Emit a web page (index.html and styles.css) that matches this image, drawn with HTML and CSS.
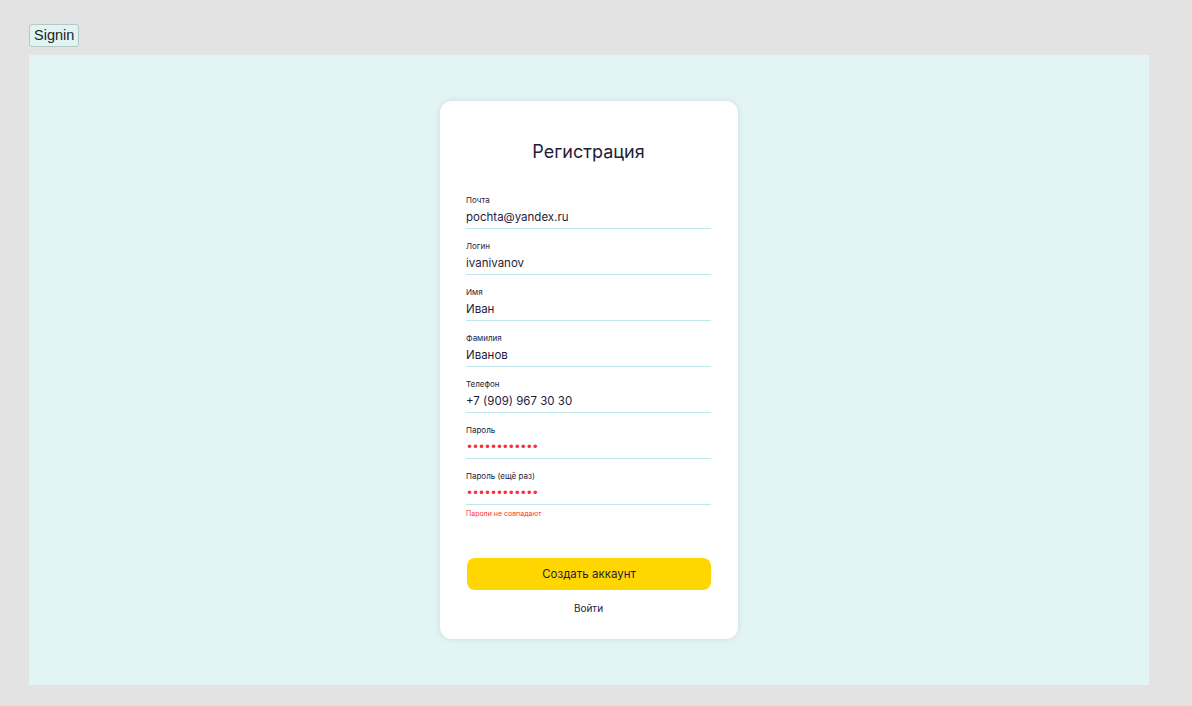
FILE: index.html
```html
<!DOCTYPE html>
<html lang="ru">
<head>
<meta charset="utf-8">
<title>Signin</title>
<link rel="stylesheet" href="styles.css">
</head>
<body>
  <button class="tab-btn" type="button">Signin</button>
  <main class="frame">
    <form class="card">
      <h1 class="card-title">Регистрация</h1>
      <div class="fields">
        <label class="field">
          <span class="field-label">Почта</span>
          <span class="field-value">pochta@yandex.ru</span>
        </label>
        <label class="field">
          <span class="field-label">Логин</span>
          <span class="field-value">ivanivanov</span>
        </label>
        <label class="field">
          <span class="field-label">Имя</span>
          <span class="field-value">Иван</span>
        </label>
        <label class="field">
          <span class="field-label">Фамилия</span>
          <span class="field-value">Иванов</span>
        </label>
        <label class="field">
          <span class="field-label">Телефон</span>
          <span class="field-value">+7 (909) 967 30 30</span>
        </label>
        <label class="field">
          <span class="field-label">Пароль</span>
          <span class="field-value field-secret">••••••••••••</span>
        </label>
        <label class="field">
          <span class="field-label">Пароль (ещё раз)</span>
          <span class="field-value field-secret">••••••••••••</span>
        </label>
      </div>
      <p class="error">Пароли не совпадают</p>
      <button class="primary-btn" type="button">Создать аккаунт</button>
      <a class="link" href="#">Войти</a>
    </form>
  </main>
</body>
</html>
```

FILE: styles.css
```css
* { box-sizing: border-box; }

html, body {
  margin: 0;
  padding: 0;
}

body {
  background: #e3e3e3;
  padding: 24px 0 0 29px;
  font-family: Inter, "Noto Sans", sans-serif;
  height: 706px;
  overflow: hidden;
}

.tab-btn {
  display: block;
  height: 23px;
  padding: 0 4px;
  margin: 0;
  background: #e1f4f2;
  border: 1px solid #b4c8c6;
  border-radius: 3px;
  font-family: "Liberation Sans", Arial, sans-serif;
  font-size: 14.5px;
  color: #222222;
  line-height: 21px;
}

.frame {
  margin-top: 8px;
  width: 1120px;
  height: 630px;
  background: #e2f4f4;
  display: flex;
  align-items: center;
  justify-content: center;
}

.card {
  width: 298px;
  height: 538px;
  background: #ffffff;
  border-radius: 12px;
  box-shadow: 0 0 6px rgba(0, 0, 0, 0.1);
  padding: 39px 27px 0 26px;
  display: flex;
  flex-direction: column;
}

.card-title {
  margin: 0;
  text-align: center;
  font-size: 18px;
  line-height: 24px;
  font-weight: 400;
  color: #1e1d3a;
}

.fields {
  margin-top: 30px;
  display: flex;
  flex-direction: column;
  gap: 11px;
}

.field {
  display: flex;
  flex-direction: column;
  gap: 3px;
  padding-bottom: 3px;
  border-bottom: 1px solid #c0e7ec;
}

.field-label {
  font-size: 8px;
  line-height: 12px;
  font-weight: 400;
  color: #1e1d3a;
}

.field-value {
  font-size: 11.5px;
  line-height: 16px;
  color: #1e1d3a;
}

.field-secret {
  color: #ff2f2f;
  font-size: 12px;
  letter-spacing: -1.1px;
  font-family: "DejaVu Sans", sans-serif;
}

.error {
  margin: 4px 0 0;
  font-size: 7px;
  line-height: 10px;
  color: #ff2f2f;
}

.primary-btn {
  margin: 39px 0 0 1px;
  height: 32px;
  border: none;
  border-radius: 8px;
  background: #ffd600;
  font-family: Inter, "Noto Sans", sans-serif;
  font-size: 11.5px;
  color: #1e1d3a;
}

.link {
  margin-top: 11px;
  text-align: center;
  font-size: 10px;
  line-height: 14px;
  color: #1e1d3a;
  text-decoration: none;
  font-weight: 400;
}
```
